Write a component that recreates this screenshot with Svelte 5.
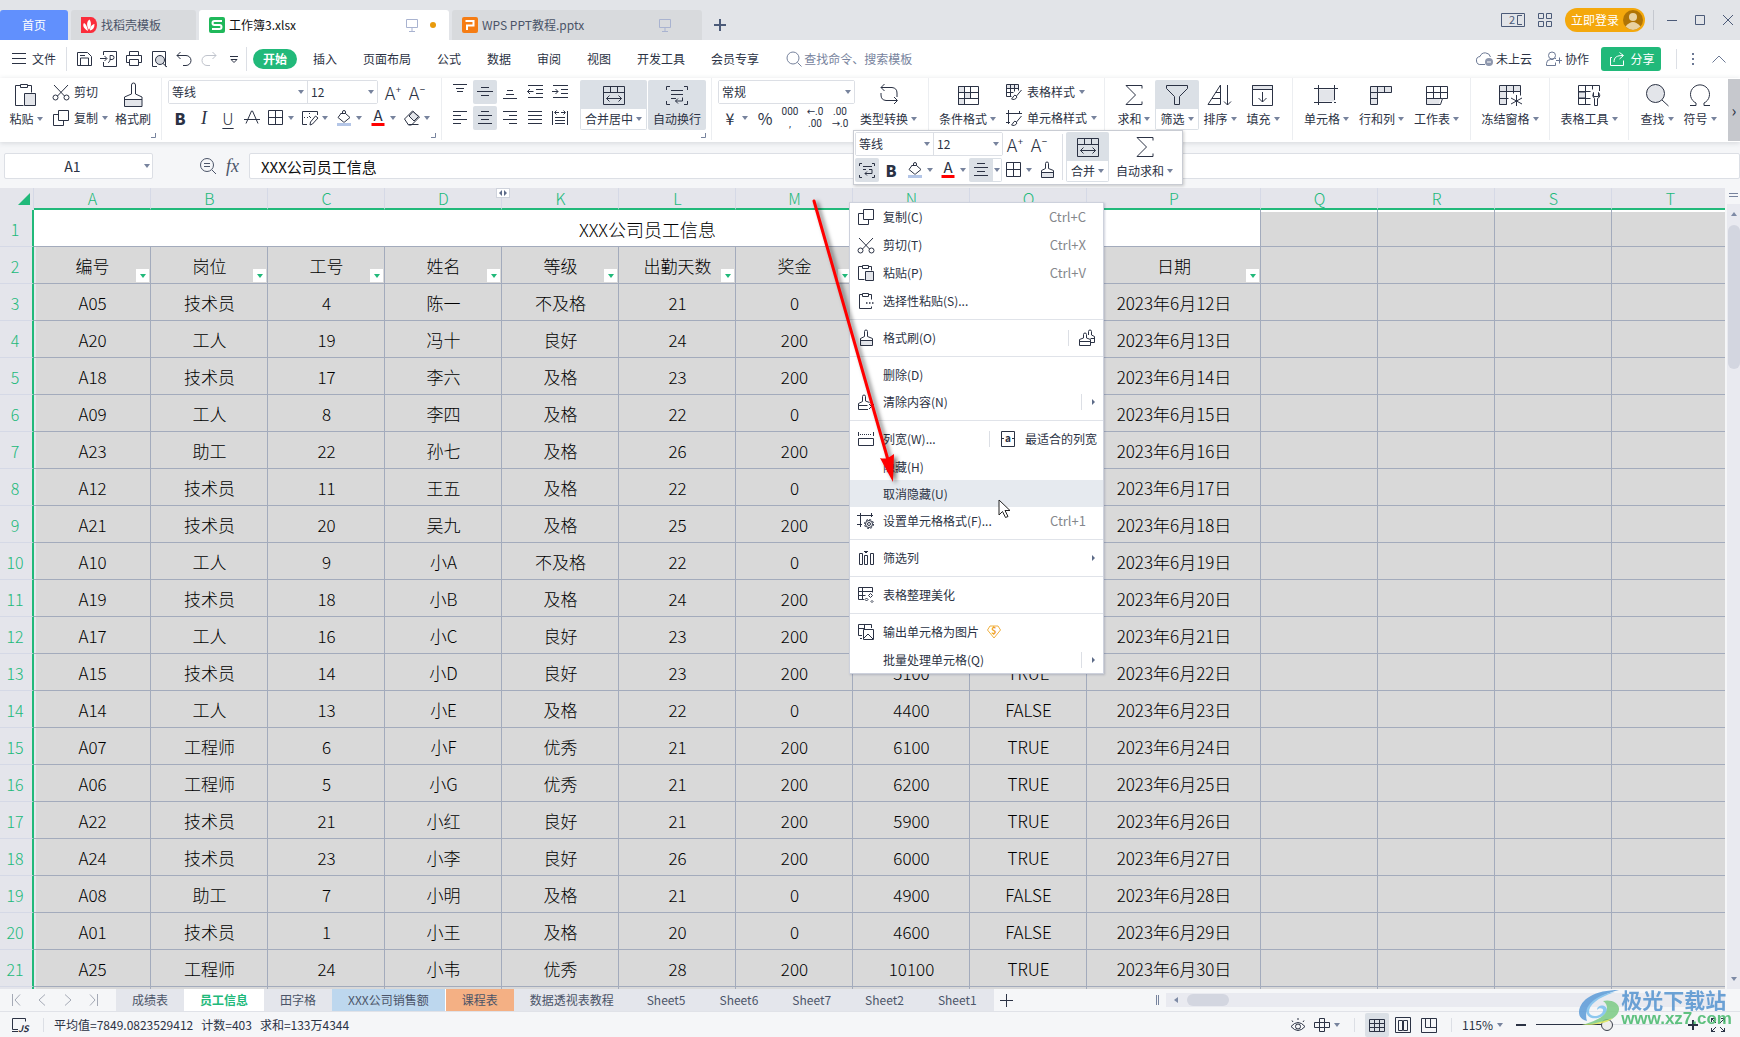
<script>
    // 20x20 toolbar icons and 26x26 ribbon icons, drawn on the half pixel
    const icons = {
        menu: '<path d="M3 4.5h14M3 9.5h14M3 14.5h14"/>',
        save: '<path d="M3.5 3.5h10l4 4v9h-14zM6.5 16v-7h8v7M6 6.5h5"/>',
        pdf: '<path d="M4.5 6V2.5h13v15h-13V13M1 9.5h6.5M5.5 7l2.5 2.5-2.5 2.5M9 13.5c3 0 2-7 2-7h2a2 2 0 0 1 0 4h-2"/>',
        print: '<path d="M5.5 6.5v-4h9v4M5.5 13.5h-3v-7h15v7h-3M5.5 10.5h9v6h-9z"/>',
        preview: '<path d="M8 17.5H3.5v-15h13v5M16.5 7v10.5"/><circle cx="11" cy="11" r="4.5" fill="#d5d8de"/><path d="M14 14.5l4 3.5"/>',
        undo: '<path d="M3 6.5h9a5 5 0 0 1 0 10h-3M6.5 3l-3.5 3.5 3.5 3.5"/>',
        redo: '<path d="M17 6.5H8a5 5 0 0 0 0 10h3M13.5 3l3.5 3.5-3.5 3.5"/>',
        more: '<path d="M6 7.5h8M7 10.5h6l-3 3z"/>',
        search: '<circle cx="9" cy="9" r="6"/><path d="M13.5 13.5l4 4"/>',
        cloud: '<path d="M10 15.5H6a4 4 0 0 1-1-8 5.5 5.5 0 0 1 10.5 0.5"/><circle cx="14" cy="13" r="4" fill="#8e97ad" stroke="none"/><path d="M12 13h4" stroke="#fff"/>',
        collab: '<circle cx="8" cy="6.5" r="3.5"/><path d="M10.5 9.5h1.5M2.5 16.5v-2a4 4 0 0 1 4-4h3M2.5 16.5h9v-3M12 11.5h6M15.5 8.5v6"/>',
        share: '<path d="M5 8.5H3.5v8h13v-5M7 13c0-5 3-6.5 9-6.5M12.5 3.5l4 3-4 3.5"/>',
        cut: '<circle cx="4.5" cy="15.5" r="2.5"/><circle cx="15.5" cy="15.5" r="2.5"/><path d="M3 3l10.5 11M17 3L6.5 14"/>',
        copy: '<path d="M7.5 2.5h10v10h-10zM7.5 6.5h-5v11h10v-5"/>',
        pasteS: '<path d="M6.5 3.5h-4v13h6M12.5 3.5h3v4M6.5 2.5h6v3h-6z"/><path d="M9.5 8.5h8v9h-8z" fill="#e3e5ea"/>',
        special: '<path d="M6.5 3.5h-3v14h12v-2M12.5 3.5h3v5M6.5 2.5h6v3h-6z"/><path d="M10 12h1.5M13 12h1.5M16 12h1.5" stroke-width="1.5"/>',
        brushS: '<path d="M4 13h12v4H4z" fill="#e3e5ea" stroke="none"/><path d="M8.5 8.500V3.500a1.500 1.500 0 0 1 3 0V8.500l5 2v7h-12v-7zM4.500 12.500h12"/>',
        brush2: '<path d="M11.5 7V3.5a1.5 1.5 0 0 1 3 0V7l3 1.5v6h-4M6.5 10V6.5a1.5 1.5 0 0 1 3 0V10l4 1.5v6h-11v-6zM2.5 13.5h11M13.500 10.500h4"/>',
        clear: '<path d="M12 17.5H2.5v-6l4-2V4.5a1.5 1.5 0 0 1 3 0V9l4 1.5M2.5 13.5h9M13 12l5 5M18 12l-5 5"/>',
        strike: '<path d="M4 15.5L9.5 3h1L16 15.5M2 11.5h16"/>',
        border: '<path d="M2.5 2.5h14v14h-14zM9.5 2.5v14M2.5 9.5h14"/>',
        pen: '<path d="M7 16.5H2.5v-13h15V7M10.5 14l5-6 2.5 2-5.5 6-2.5 1z" /><path d="M4 9.5h8M9.5 5v6" stroke-dasharray="1 2"/>',
        fill: '<path d="M6.5 5.5h5l4.5 4-5.5 4.5h-1L4 9.5l3-4M8.5 5.5V4a1.5 1.5 0 0 1 3 0v1.5"/><path d="M3 16.5h14" stroke="#b4c6e7" stroke-width="3"/>',
        colorA: '<text x="10" y="13" text-anchor="middle" font-size="15" fill="currentColor" stroke="none">A</text><path d="M3.5 16.5h13" stroke="#f00" stroke-width="3"/>',
        eraser: '<path d="M2.5 11l8-8 7 6-8 8h-3z"/><path d="M7 8l4-4.5 5.5 5-4.5 4.5z" fill="#e3e5ea"/><path d="M6.5 16.5h10"/>',
        vtop: '<path d="M3 2.5h14M6 6.5h8M7 9.5h6"/>',
        vmid: '<path d="M6 5.5h8M2 9.5h16M6 13.5h8"/>',
        vbot: '<path d="M7 8.5h6M6 12.5h8M3 16.5h14"/>',
        left: '<path d="M3 3.5h14M3 7.5h8M3 11.5h14M3 15.5h8"/>',
        center: '<path d="M6 3.5h8M3 7.5h14M6 11.5h8M3 15.5h14"/>',
        right: '<path d="M3 3.5h14M9 7.5h8M3 11.5h14M9 15.5h8"/>',
        justify: '<path d="M3 3.5h14M3 7.5h14M3 11.5h14M3 15.5h14"/>',
        outdent: '<path d="M3 3.5h15M11 7.5h7M11 11.5h7M3 15.5h15M2.5 9.5h6M5 7l-2.5 2.5L5 12"/>',
        indent: '<path d="M3 3.5h15M11 7.5h7M11 11.5h7M3 15.5h15M2 9.5h6M5.5 7L8 9.5 5.5 12"/>',
        distrib: '<path d="M2.5 3v14M17.5 3v14M5 4.5h4M11 4.5h4M6.5 2.5l-2 2 2 2M13.5 2.5l2 2-2 2M5 9.5h10M5 12.5h10M5 15.5h10"/>',
        style1: '<path d="M3 3h11v3H3z" fill="#e3e5ea" stroke="none"/><path d="M2.5 2.5h12v6M2.5 2.5v12h5M2.5 6.5h12M2.5 10.5h7M6.5 2.5v12M10.5 2.5v7M17.5 8l-5 6M11 13l2 2c-1 2.5-4 3-5.5 2 1.5-1 1.5-3 3.5-4z"/>',
        style2: '<path d="M2 5.5h16M4.5 2v14M2 14.5h4M15.5 3v3M17.5 8l-5 6M11 13l2 2c-1 2.5-4 3-5.5 2 1.5-1 1.5-3 3.5-4z"/>',
        width: '<path d="M2.5 9.5h15v7h-15zM2.5 3v4M17.5 3v4"/><path d="M4 5.5h12" stroke-dasharray="1 1"/>',
        fit: '<path d="M3.5 2.5h13v15h-13zM4 9.5h2M14 9.5h2"/><text x="10" y="13" text-anchor="middle" font-size="10" font-weight="700" fill="currentColor" stroke="none">a</text>',
        cellfmt: '<path d="M1 4.5h16M4.5 2v14M1 13.5h5M15.5 2v4"/><circle cx="13" cy="13" r="4.5" stroke-dasharray="2 1.5" stroke-width="1"/><circle cx="13" cy="13" r="3.5"/><circle cx="13" cy="13" r="1.5"/>',
        filtercol: '<path d="M3.5 5.5h3v11h-3zM8.5 7.5h3v9h-3zM14.5 5.5h3v11h-3zM8 3.5h4M9 4.5h2"/>',
        beautify: '<path d="M8 14.5H2.5v-12h14v5M2.5 6.5h14M6.5 2.5v12M2.5 10.5h7"/><path d="M14.5 8.5l2 2-2 2-2-2zM10.5 13l1.5 1.5-1.5 1.5-1.5-1.5zM16 15.5l1 1-1 1-1-1z"/>',
        output: '<path d="M6 13.5H2.5v-11h13V6M2.5 6.5h6M8.5 2.5v5M7.5 7.5h10v10h-10zM8 16l4-4 5 5M4 16.5h2"/>',
        wrapS: '<path d="M5 3.5H2.5V6M15 3.5h2.5V6M5 17.5H2.5V15M15 17.5h2.5V15M6 6.5h9M6 9.5h3M12 9.5h3v4H8M10 11.5l-2 2 2 2"/>',
        zoomout: '<circle cx="9" cy="9" r="6.5"/><path d="M14 14l4 4M6 7.5h6M6 10.5h6"/>',
        monitor: '<path d="M4.5 4.5h11v8h-11zM10 13v3M7 16.5h6"/>',
        eye: '<path d="M3 11.5q7-8 14 0q-7 8-14 0M4 5.5l1 1.5M10 3v2M16 5.5l-1 1.5"/><circle cx="10" cy="11.5" r="2.5"/>',
        cross: '<path d="M7.5 3.5h5v4h5v5h-5v4h-5v-4h-5v-5h5zM7.5 7.5h5v5h-5z"/>',
        sheet: '<path d="M2.5 4.5h15v12h-15zM2.5 8.5h15M2.5 12.5h15M7.5 4.5v12M12.5 4.5v12"/>',
        page: '<path d="M2.5 2.5h15v15h-15zM5.5 5.5h4v10h-4zM10.5 5.5h4v10h-4z"/>',
        brk: '<path d="M2.5 3.5h15v14h-15zM6.5 4v8.5h11M11.5 4v8"/>',
        full: '<path d="M12 8l5-5M13 3.5h3.5V7M8 8L3 3M3.5 7V3.5H7M12 12l5 5M13 16.5h3.5V13M8 12l-5 5M3.5 13v3.5H7"/>',
        macro: '<path d="M8 14.5H2.5v-11h13v3M2 16.5h6"/><text x="8" y="17" font-size="9" font-style="italic" font-weight="700" fill="currentColor" stroke="none">JS</text>',
        paste: '<path d="M7.5 4.5h-5v20h8M14.5 4.5h4v7M7.5 3.5h7v3h-7z"/><path d="M11.5 12.5h11v12h-11z" fill="#e3e5ea"/>',
        brush: '<path d="M5 18.5h17v7H5z" fill="#e3e5ea" stroke="none"/><path d="M11.5 13V4q0-2 2-2t2 2v9l6.500 3v9.500h-17.500V16zM4.500 18.500h17.500"/>',
        merge: '<path d="M2.5 5.5h21v18h-21zM2.5 11.5h21M9.5 6v5M16.5 6v5"/><path d="M5.5 17.5h15M8.5 14.5l-3 3 3 3M17.5 14.5l3 3-3 3"/>',
        wrap: '<path d="M6 5.5H2.5V9M20 5.5h3.5V9M6 23.5H2.5V20M20 23.5h3.5V20M7 9.5h12M7 13.5h12M7 17.5h5M18.5 16.5v3.5h-7M14 17.5l-2.5 2.5 2.5 2.5"/>',
        convert: '<path d="M5 12v2q0 5 5 5.500h11M18 16l3.500 3.500-3.500 3.500M21 16v-4q0-5-5-5.500H5M8.500 3L5 6.500 8.500 10"/>',
        cond: '<path d="M3.5 5.5h6v6h-6zM9.5 11.5h6v6h-6zM3.5 17.5h6v6h-6z" fill="#e3e5ea"/><path d="M3.5 5.5h20v18h-20zM9.5 5.5v18M15.5 5.5v12M3.5 11.5h20M3.5 17.5h20"/>',
        sum: '<path d="M21 7.5v-3H5l9.5 9.5L5 23.5h16v-3"/>',
        filter: '<path d="M2.5 4.5h21v3l-8 8v8h-5v-8l-8-8z"/>',
        sort: '<path d="M1 23.5L13.5 4v19.5zM5 17.5h8M8.5 11.5h5M20.5 4v20M17 20.5l3.5 3.5 3.5-3.5"/>',
        filldown: '<path d="M2.5 4.5h20v20h-20z"/><path d="M2.5 4.5h20v4h-20z" fill="#e3e5ea"/><path d="M12.5 11v10M8.5 17l4 4 4-4"/>',
        cell: '<path d="M5.5 8.5h16v12h-16z" fill="#e3e5ea" stroke="none"/><path d="M1 7.5h24M5.5 4v20M21.5 4v15M1 21.5h18M21 21.5h2"/>',
        rowcol: '<path d="M2.5 5.5h21v6h-14v12h-7z" fill="#e3e5ea"/><path d="M2.5 11.5h7M2.5 17.5h7M9.5 5.5v6M16.5 5.5v6"/>',
        worksheet: '<path d="M3 18h13.5l-1.5 5h-12z" fill="#e3e5ea" stroke="none"/><path d="M2.5 5.5h21v12h-5l-2 6h-14zM2.5 11.5h21M2.5 17.5h16M9.5 5.5v12M16.5 5.5v12"/>',
        freeze: '<path d="M2.5 4.5h21v6h-14v13h-7z" fill="#e3e5ea"/><path d="M2.5 10.5h21v4M2.5 17.5h9M9.5 4.5v19M16.5 4.5v8M19.5 14v11M14 17l11 6M25 17l-11 6"/>',
        tools: '<path d="M2.5 11h7v6h-7z" fill="#e3e5ea"/><path d="M23.5 10V4.5h-21v19h12M2.5 10.5h12M2.5 17.5h12M9.5 4.5v19M16.5 4.5v4M18.5 24.5v-7q-3-2-1-6v4h5v-4q3 4-1 6v7z"/>',
        find: '<circle cx="11.5" cy="12.5" r="9" fill="#e3e5ea"/><path d="M18 19l6.5 6"/>',
        omega: '<path d="M3 24.5h6v-2.5a9.5 9.5 0 1 1 8 0v2.5h6"/>'
    }

    const menus = ["插入", "页面布局", "公式", "数据", "审阅", "视图", "开发工具", "会员专享"]
    const quick = ["save", "pdf", "print", "preview", "undo", "redo", "more"]

    const columns = [
        { id: "A", name: "编号" }, { id: "B", name: "岗位" }, { id: "C", name: "工号" }, { id: "D", name: "姓名" },
        { id: "K", name: "等级" }, { id: "L", name: "出勤天数" }, { id: "M", name: "奖金" }, { id: "N", name: "" },
        { id: "O", name: "" }, { id: "P", name: "日期" }
    ]
    const blanks = ["Q", "R", "S", "T"]

    const rows = [
        ["A05", "技术员", 4, "陈一", "不及格", 21, 0, "", ""],
        ["A20", "工人", 19, "冯十", "良好", 24, 200, "", ""],
        ["A18", "技术员", 17, "李六", "及格", 23, 200, "", ""],
        ["A09", "工人", 8, "李四", "及格", 22, 0, "", ""],
        ["A23", "助工", 22, "孙七", "及格", 26, 200, "", ""],
        ["A12", "技术员", 11, "王五", "及格", 22, 0, "", ""],
        ["A21", "技术员", 20, "吴九", "及格", 25, 200, "", ""],
        ["A10", "工人", 9, "小A", "不及格", 22, 0, "", ""],
        ["A19", "技术员", 18, "小B", "及格", 24, 200, "", ""],
        ["A17", "工人", 16, "小C", "良好", 23, 200, "", ""],
        ["A15", "技术员", 14, "小D", "良好", 23, 200, 5100, "TRUE"],
        ["A14", "工人", 13, "小E", "及格", 22, 0, 4400, "FALSE"],
        ["A07", "工程师", 6, "小F", "优秀", 21, 200, 6100, "TRUE"],
        ["A06", "工程师", 5, "小G", "优秀", 21, 200, 6200, "TRUE"],
        ["A22", "技术员", 21, "小红", "良好", 21, 200, 5900, "TRUE"],
        ["A24", "技术员", 23, "小李", "良好", 26, 200, 6000, "TRUE"],
        ["A08", "助工", 7, "小明", "及格", 21, 0, 4900, "FALSE"],
        ["A01", "技术员", 1, "小王", "及格", 20, 0, 4600, "FALSE"],
        ["A25", "工程师", 24, "小韦", "优秀", 28, 200, 10100, "TRUE"]
    ]

    const sheets = [
        { name: "成绩表" }, { name: "员工信息", kind: "current" }, { name: "田字格" },
        { name: "XXX公司销售额", kind: "blue" }, { name: "课程表", kind: "orange" }, { name: "数据透视表教程" },
        { name: "Sheet5", kind: "plain" }, { name: "Sheet6", kind: "plain" }, { name: "Sheet7", kind: "plain" },
        { name: "Sheet2", kind: "plain" }, { name: "Sheet1", kind: "plain" }
    ]

    const contextMenu = [
        { icon: "copy", text: "复制(C)", key: "Ctrl+C" },
        { icon: "cut", text: "剪切(T)", key: "Ctrl+X" },
        { icon: "pasteS", text: "粘贴(P)", key: "Ctrl+V" },
        { icon: "special", text: "选择性粘贴(S)..." },
        null,
        { icon: "brushS", text: "格式刷(O)", extra: "brush2" },
        null,
        { text: "删除(D)", short: true },
        { icon: "clear", text: "清除内容(N)", sub: true, split: true },
        null,
        { icon: "width", text: "列宽(W)...", extra: "fit", extraText: "最适合的列宽" },
        { text: "隐藏(H)", short: true },
        { text: "取消隐藏(U)", hover: true, short: true },
        { icon: "cellfmt", text: "设置单元格格式(F)...", key: "Ctrl+1" },
        null,
        { icon: "filtercol", text: "筛选列", sub: true },
        null,
        { icon: "beautify", text: "表格整理美化" },
        null,
        { icon: "output", text: "输出单元格为图片", coin: true },
        { text: "批量处理单元格(Q)", sub: true, split: true, short: true }
    ]

    let zoom = $state(115)
    let cellText = $state("XXX公司员工信息")
    let cellName = $state("A1")
</script>

{#snippet icon(name, size = 20)}
    <svg class="icon" width={size} height={size} viewBox="0 0 {size} {size}" aria-hidden="true">{@html icons[name]}</svg>
{/snippet}

{#snippet caret()}
    <svg class="caret" width="6" height="4" viewBox="0 0 6 4" aria-hidden="true"><path d="M0 0h6L3 4z" /></svg>
{/snippet}

{#snippet tool(name, drop = false, on = false)}
    <button class="tool" class:drop class:on aria-label={name}>
        <span class="face">{@render icon(name)}</span>
        {#if drop}{@render caret()}{/if}
    </button>
{/snippet}

{#snippet letter(text, kind, label)}
    <button class="tool" aria-label={label}><span class="letter {kind}">{text}</span></button>
{/snippet}

{#snippet big(name, text, drop = true, on = "")}
    <button class="big {on}">
        <span class="pic">{@render icon(name, 26)}</span>
        <span class="label">{text}{#if drop}{@render caret()}{/if}</span>
    </button>
{/snippet}

{#snippet wide(name, text, drop = true)}
    <button class="wide">{@render icon(name)}<span>{text}</span>{#if drop}{@render caret()}{/if}</button>
{/snippet}

{#snippet dropdown(label, value)}
    <span class="dropdown">
        <select aria-label={label}><option>{value}</option></select>
        {@render caret()}
    </span>
{/snippet}

{#snippet corner()}
    <svg class="corner" width="5" height="5" viewBox="0 0 5 5" aria-hidden="true"><path d="M4.5 0v4.5H0" /></svg>
{/snippet}

<div class="window">
    <header class="titlebar">
        <button class="tab home">首页</button>
        <button class="tab docer">
            <svg width="16" height="16" viewBox="0 0 16 16"><path d="M0 0h10a6 8 0 0 1 0 16H0z" fill="#fb2d3b" /><path d="M7 14C2 11 1.5 8 3 6c2 1 3.5 4 4 8zM8 13C5 8 6 4 8.5 2.5 11 6 10 10 8 13zM9 13.5c0-4 2-6 4.5-6.5 0 4-1.5 6-4.5 6.5z" fill="#fff" /></svg>
            <span>找稻壳模板</span>
        </button>
        <button class="tab file current">
            <svg width="16" height="16" viewBox="0 0 16 16"><rect width="16" height="16" rx="2" fill="#1fb85a" /><path d="M13 4H5.5a2 2 0 0 0 0 4h5a2 2 0 0 1 0 4H3" fill="none" stroke="#fff" stroke-width="2" /></svg>
            <span class="grow">工作簿3.xlsx</span>
            <span class="pale">{@render icon("monitor")}</span>
            <span class="dot"></span>
        </button>
        <button class="tab file">
            <svg width="16" height="16" viewBox="0 0 16 16"><rect width="16" height="16" rx="2" fill="#f57c14" /><path d="M5 13V8.5h6.5V4H3.5" fill="none" stroke="#fff" stroke-width="2" /></svg>
            <span class="grow">WPS PPT教程.pptx</span>
            <span class="pale last">{@render icon("monitor")}</span>
        </button>
        <button class="plus" aria-label="新建标签"><svg width="12" height="12" viewBox="0 0 12 12"><path d="M6 0v12M0 6h12" stroke="#4b5a78" stroke-width="2" /></svg></button>
        <div class="winctl">
            <svg width="24" height="14" viewBox="0 0 24 14"><path d="M.5.5h23v13H.5zM21 2.5h-4.5v9H21M19 11.5h2" /><text x="8" y="11" font-size="11" fill="#4b5a78" stroke="none">2</text></svg>
            <svg width="14" height="14" viewBox="0 0 14 14"><path d="M.5.5h5v5h-5zM8.5.5h5v5h-5zM.5 8.5h5v5h-5zM8.5 8.5h5v5h-5z" /></svg>
            <button class="login">立即登录<svg width="20" height="20" viewBox="0 0 20 20"><circle cx="10" cy="10" r="10" fill="#b07405" stroke="none" /><circle cx="10" cy="7" r="4" fill="#e9d2a1" stroke="none" /><path d="M2.5 16.5q7.5-9 15 0-7.500 7-15 0z" fill="#e9d2a1" stroke="none" /></svg></button>
            <span class="bar"></span>
            <button aria-label="最小化"><svg width="10" height="12" viewBox="0 0 10 12"><path d="M0 6.5h10" /></svg></button>
            <button aria-label="最大化"><svg width="10" height="10" viewBox="0 0 10 10"><path d="M.5.5h9v9h-9z" /></svg></button>
            <button aria-label="关闭"><svg width="10" height="10" viewBox="0 0 10 10"><path d="M0 0l10 10M10 0L0 10" /></svg></button>
        </div>
    </header>

    <nav class="menubar">
        <button class="filemenu">{@render icon("menu")}文件</button>
        <span class="bar"></span>
        {#each quick as q}
            <button class="quick" class:dim={q == "redo"} aria-label={q}>{@render icon(q)}</button>
        {/each}
        <span class="bar"></span>
        <button class="pill">开始</button>
        {#each menus as m}
            <button class="menu">{m}</button>
        {/each}
        <label class="find">{@render icon("search")}<input placeholder="查找命令、搜索模板" /></label>
        <div class="account">
            <button class="soft">{@render icon("cloud")}<span>未上云</span></button>
            <button class="soft">{@render icon("collab")}<span>协作</span></button>
            <button class="share">{@render icon("share")}分享</button>
            <span class="bar"></span>
            <button class="soft" aria-label="更多"><svg width="4" height="14" viewBox="0 0 4 14"><path d="M1 1h2v2H1zM1 6h2v2H1zM1 11h2v2H1z" fill="#6b7894" /></svg></button>
            <button class="soft fold" aria-label="收起"><svg class="icon" width="14" height="8" viewBox="0 0 14 8"><path d="M.5 7.5l6.5-6.5 6.5 6.5" /></svg></button>
        </div>
    </nav>

    <section class="ribbon">
        <div class="group clip">
            {@render big("paste", "粘贴")}
            <div class="stack">
                {@render wide("cut", "剪切", false)}
                {@render wide("copy", "复制")}
            </div>
            {@render big("brush", "格式刷", false)}
            {@render corner()}
        </div>
        <div class="group">
            <div class="stack">
                <div class="line">
                    <span class="fontbox">{@render dropdown("字体", "等线")}{@render dropdown("字号", "12")}</span>
                    <span class="sizes">{@render letter("A⁺", "scale", "增大字号")}{@render letter("A⁻", "scale", "减小字号")}</span>
                </div>
                <div class="line">
                    {@render letter("B", "bold", "加粗")}
                    {@render letter("I", "italic", "倾斜")}
                    {@render letter("U", "under", "下划线")}
                    {@render tool("strike")}
                    {@render tool("border", true)}
                    {@render tool("pen", true)}
                    {@render tool("fill", true)}
                    {@render tool("colorA", true)}
                    {@render tool("eraser", true)}
                </div>
            </div>
            {@render corner()}
        </div>
        <div class="group">
            <div class="stack">
                <div class="line spaced">
                    {@render tool("vtop")}{@render tool("vmid", false, true)}{@render tool("vbot")}{@render tool("outdent")}{@render tool("indent")}
                </div>
                <div class="line spaced">
                    {@render tool("left")}{@render tool("center", false, true)}{@render tool("right")}{@render tool("justify")}{@render tool("distrib")}
                </div>
            </div>
            <div class="pair">
                {@render big("merge", "合并居中", true, "on split")}
                {@render big("wrap", "自动换行", false, "on")}
            </div>
            {@render corner()}
        </div>
        <div class="group">
            <div class="stack number">
                <span class="fontbox">{@render dropdown("数字格式", "常规")}</span>
                <div class="line spaced">
                    <button class="tool drop" aria-label="货币"><span class="face letter">¥</span>{@render caret()}</button>
                    {@render letter("%", "", "百分比")}
                    <button class="tool" aria-label="千位分隔"><span class="tiny">000<br />,</span></button>
                    <button class="tool" aria-label="增加小数"><span class="tiny">←.0<br />.00</span></button>
                    <button class="tool" aria-label="减少小数"><span class="tiny">.00<br />→.0</span></button>
                </div>
            </div>
            {@render big("convert", "类型转换")}
        </div>
        <div class="group">
            {@render big("cond", "条件格式")}
            <div class="stack styles">
                {@render wide("style1", "表格样式")}
                {@render wide("style2", "单元格样式")}
            </div>
        </div>
        <div class="group row">
            {@render big("sum", "求和")}
            {@render big("filter", "筛选", true, "on split")}
            {@render big("sort", "排序")}
            {@render big("filldown", "填充")}
        </div>
        <div class="group row">
            {@render big("cell", "单元格")}
            {@render big("rowcol", "行和列")}
            {@render big("worksheet", "工作表")}
        </div>
        <div class="group row">{@render big("freeze", "冻结窗格")}</div>
        <div class="group row">{@render big("tools", "表格工具")}</div>
        <div class="group row last">
            {@render big("find", "查找")}
            {@render big("omega", "符号")}
        </div>
        <button class="scroller" aria-label="向右滚动">›</button>
    </section>

    <section class="formula">
        <span class="namebox"><input aria-label="名称框" bind:value={cellName} />{@render caret()}</span>
        <span class="fx">{@render icon("zoomout")}<i>fx</i></span>
        <input class="content" aria-label="编辑栏" bind:value={cellText} />
    </section>

    <main class="work">
        <div class="grid">
            <table>
                <colgroup>
                    <col class="num" />
                    {#each columns as c}<col class={c.id == "P" ? "date" : "std"} />{/each}
                    {#each blanks as b}<col class="std" />{/each}
                </colgroup>
                <thead>
                    <tr>
                        <th class="all"><svg width="12" height="12" viewBox="0 0 12 12"><path d="M12 0v12H0z" fill="#21b97a" /></svg></th>
                        {#each columns as c}<th>{c.id}</th>{/each}
                        {#each blanks as b}<th>{b}</th>{/each}
                    </tr>
                </thead>
                <tbody>
                    <tr class="first">
                        <th>1</th>
                        <td class="title" colspan="10">XXX公司员工信息</td>
                        {#each blanks as b}<td></td>{/each}
                    </tr>
                    <tr>
                        <th>2</th>
                        {#each columns as c}
                            <td class="name">{c.name}<button class="filter" aria-label="筛选{c.name}"><svg width="6" height="4" viewBox="0 0 6 4"><path d="M0 0h6L3 4z" fill="#21b97a" /></svg></button></td>
                        {/each}
                        {#each blanks as b}<td></td>{/each}
                    </tr>
                    {#each rows as row, i}
                        <tr>
                            <th>{i + 3}</th>
                            {#each row as value}<td>{value}</td>{/each}
                            <td>2023年6月{i + 12}日</td>
                            {#each blanks as b}<td></td>{/each}
                        </tr>
                    {/each}
                    <tr>
                        <th></th>
                        {#each columns as c}<td></td>{/each}
                        {#each blanks as b}<td></td>{/each}
                    </tr>
                </tbody>
            </table>
            <span class="hidden-cols"><svg width="8" height="6" viewBox="0 0 8 6"><path d="M3 0v6L0 3zM5 0v6l3-3z" fill="#5d6b88" /></svg></span>
        </div>
        <div class="vscroll">
            <span class="splitter"></span>
            <div class="track">
                <svg width="6" height="4" viewBox="0 0 6 4"><path d="M3 0l3 4H0z" fill="#7d8aa5" /></svg>
                <span class="thumb"></span>
                <svg width="6" height="4" viewBox="0 0 6 4"><path d="M0 0h6L3 4z" fill="#7d8aa5" /></svg>
            </div>
        </div>
    </main>

    <nav class="sheets">
        <div class="steps">
            <button aria-label="第一个"><svg width="10" height="12" viewBox="0 0 10 12"><path d="M1.5 0v12M9 .5L4 6l5 5.5" /></svg></button>
            <button aria-label="上一个"><svg width="10" height="12" viewBox="0 0 10 12"><path d="M8 .5L2 6l6 5.5" /></svg></button>
            <button aria-label="下一个"><svg width="10" height="12" viewBox="0 0 10 12"><path d="M2 .5L8 6l-6 5.5" /></svg></button>
            <button aria-label="最后一个"><svg width="10" height="12" viewBox="0 0 10 12"><path d="M8.5 0v12M1 .5L6 6l-5 5.5" /></svg></button>
        </div>
        {#each sheets as s}
            <button class="sheet {s.kind ?? ''}">{s.name}</button>
        {/each}
        <button class="add" aria-label="新建工作表"><svg width="13" height="13" viewBox="0 0 13 13"><path d="M6.5 0v13M0 6.5h13" stroke="#2b3244" /></svg></button>
        <div class="hscroll">
            <span class="grip"></span>
            <div class="track">
                <svg width="4" height="6" viewBox="0 0 4 6"><path d="M4 0v6L0 3z" fill="#7d8aa5" /></svg>
                <span class="thumb"></span>
            </div>
        </div>
    </nav>

    <footer class="status">
        {@render icon("macro")}
        <span class="bar"></span>
        <span class="sums"><span>平均值=7849.0823529412</span><span>计数=403</span><span>求和=133万4344</span></span>
        <div class="views">
            {@render tool("eye")}
            {@render tool("cross", true)}
            <span class="bar"></span>
            {@render tool("sheet", false, true)}
            {@render tool("page")}
            {@render tool("brk")}
            <span class="bar"></span>
            <button class="percent">{zoom}%{@render caret()}</button>
            <button class="sign" aria-label="缩小"><svg width="10" height="10" viewBox="0 0 10 10"><path d="M0 5h10" /></svg></button>
            <input type="range" min="15" max="215" aria-label="显示比例" bind:value={zoom} />
            <button class="sign" aria-label="放大"><svg width="10" height="10" viewBox="0 0 10 10"><path d="M0 5h10M5 0v10" /></svg></button>
            {@render tool("full")}
        </div>
    </footer>

    <div class="minibar">
        <div class="stack">
            <div class="line">
                <span class="fontbox">{@render dropdown("字体", "等线")}{@render dropdown("字号", "12")}</span>
                <span class="sizes">{@render letter("A⁺", "scale", "增大字号")}{@render letter("A⁻", "scale", "减小字号")}</span>
            </div>
            <div class="line">
                {@render tool("wrapS", false, true)}
                {@render letter("B", "bold", "加粗")}
                {@render tool("fill", true)}
                {@render tool("colorA", true)}
                {@render tool("center", true, true)}
                {@render tool("border", true)}
                {@render tool("brushS")}
            </div>
        </div>
        <span class="bar"></span>
        {@render big("merge", "合并", true, "on split")}
        {@render big("sum", "自动求和")}
    </div>

    <div class="context">
        {#each contextMenu as item}
            {#if item == null}
                <hr />
            {:else}
                <div class="item" class:hover={item.hover} class:short={item.short}>
                    <button class="entry">
                        <span class="slot">{#if item.icon}{@render icon(item.icon)}{/if}</span>
                        <span>{item.text}</span>
                        {#if item.coin}<svg class="coin" width="14" height="14" viewBox="0 0 14 14"><path d="M3 1h8l2.5 4L7 13 .5 5z" /><text x="7" y="9" text-anchor="middle" font-size="9">$</text></svg>{/if}
                        {#if item.key}<kbd>{item.key}</kbd>{/if}
                    </button>
                    {#if item.split}<span class="bar"></span>{/if}
                    {#if item.sub}<svg class="more" width="3" height="6" viewBox="0 0 3 6"><path d="M0 0v6l3-3z" fill="#5d6b88" /></svg>{/if}
                    {#if item.extra}
                        <span class="bar"></span>
                        <button class="extra" aria-label={item.extraText ?? "多次格式刷"}>{@render icon(item.extra)}{#if item.extraText}<span>{item.extraText}</span>{/if}</button>
                    {/if}
                </div>
            {/if}
        {/each}
    </div>

    <svg class="arrow" width="100" height="296" viewBox="0 0 100 296" aria-hidden="true">
        <path d="M7 7L81 266" stroke="#f00" stroke-width="3" stroke-linecap="round" />
        <path d="M73 264q4 1 7 0 3-1 7-4l-1 28z" fill="#f00" />
    </svg>
    <svg class="cursor" width="13" height="20" viewBox="0 0 13 20" aria-hidden="true"><path d="M1 1v15l3.5-3.5 3 6 2.5-1-3-6h5z" fill="#fff" stroke="#222" /></svg>

    <div class="mark" aria-hidden="true">
        <svg width="44" height="40" viewBox="0 0 44 40">
            <path d="M42 2C18 2 3 11 2 24c0 5 3 8 8 9C6 21 17 8 42 2z" fill="#5b9bd8" />
            <path d="M38 4C20 10 12 17 12 24c1 6 12 5 14-1 1-3-4-4-6-1 0-6 10-6 10 0-1 8-17 12-20 4C7 18 20 6 38 4z" fill="#7cc0ee" />
            <path d="M26 13c8-2 17 2 16 9C40 33 22 37 5 37c11-3 24-8 25-16 0-4-1-6-4-8z" fill="#7ccb84" />
            <path d="M5 37c13 0 24-1 31-7-8 3-19 6-31 7z" fill="#e2e85a" />
        </svg>
        <div><b>极光下载站</b><span>www.xz7.com</span></div>
    </div>
</div>

<style>
    :global(body) {
        margin: 0;
        overflow: hidden;
    }

    .window {
        --ink: #2b3244;
        --green: #21b97a;
        --line: #dcdfe5;
        --on: #dbe0e6;
        position: relative;
        display: flex;
        flex-direction: column;
        height: 100vh;
        overflow: hidden;
        background: #f5f6f8;
        color: var(--ink);
        font-family: "Noto Sans CJK SC", "Noto Sans", sans-serif;
        font-size: 12px;
        line-height: 18px;
    }

    button, input, select {
        font: inherit;
        color: inherit;
        border: 0;
        padding: 0;
        margin: 0;
        background: none;
        outline: 0;
        white-space: nowrap;
    }

    svg {
        flex: none;
        display: block;
    }

    .icon {
        fill: none;
        stroke: currentColor;
    }

    .caret {
        flex: none;
        fill: #77839d;
    }

    .bar {
        flex: none;
        width: 1px;
        height: 20px;
        background: var(--line);
    }

    /* title bar */
    .titlebar {
        display: flex;
        gap: 3px;
        height: 30px;
        padding-top: 10px;
        background: #e2e4e8;
    }

    .tab {
        display: flex;
        align-items: center;
        gap: 4px;
        border-radius: 3px 3px 0 0;
        background: #d8dadd;
        color: #4b5468;
        padding: 0 10px;
        text-align: left;
    }

    .home {
        width: 68px;
        justify-content: center;
        background: #6190fd;
        color: #fff;
    }

    .docer {
        width: 125px;
    }

    .file {
        width: 250px;
    }

    .current {
        background: #fff;
        color: #111;
    }

    .grow {
        flex: 1;
    }

    .pale {
        color: #a9b3d0;
        padding-right: 4px;
    }

    .pale.last {
        padding-right: 17px;
    }

    .dot {
        width: 6px;
        height: 6px;
        border-radius: 50%;
        background: #e89a0c;
        margin-right: 3px;
    }

    .plus {
        padding: 0 9px;
    }

    .winctl {
        display: flex;
        align-items: center;
        gap: 13px;
        height: 20px;
        margin-left: auto;
        padding-right: 2px;
    }

    .winctl svg {
        fill: none;
        stroke: #4b5a78;
    }

    .winctl .bar {
        background: #c5c8cf;
        margin: 0 0 0 -5px;
    }

    .winctl > button:not(.login) {
        width: 15px;
    }

    .login {
        display: flex;
        align-items: center;
        gap: 4px;
        height: 24px;
        border-radius: 12px;
        padding: 0 2px 0 6px;
        background: #f4a80c;
        color: #fff;
    }

    /* menu row */
    .menubar {
        display: flex;
        align-items: center;
        height: 38px;
        background: #fff;
        padding-left: 9px;
    }

    .filemenu {
        display: flex;
        gap: 3px;
        align-items: center;
        width: 57px;
    }

    .menubar > .bar {
        height: 24px;
    }

    .quick {
        width: 25px;
        display: flex;
        justify-content: center;
    }

    .filemenu + .bar {
        margin-right: 4px;
    }

    .quick + .bar {
        margin-right: 6px;
    }

    .dim {
        color: #bfc3cc;
    }

    .pill {
        height: 20px;
        width: 44px;
        margin-right: 3px;
        border-radius: 10px;
        background: var(--green);
        color: #fff;
        font-weight: 700;
    }

    .menu {
        padding: 0 13px;
    }

    .find {
        display: flex;
        align-items: center;
        color: #77839d;
        margin-left: 12px;
    }

    .find input {
        width: 120px;
    }

    .find input::placeholder {
        color: #77839d;
        opacity: 1;
    }

    .account {
        display: flex;
        align-items: center;
        gap: 12px;
        margin-left: auto;
        padding-right: 14px;
    }

    .account .bar {
        margin: 0 2px 0 3px;
    }

    .soft {
        display: flex;
        align-items: center;
        gap: 1px;
        color: #6b7894;
    }

    .soft span {
        color: var(--ink);
    }

    .fold {
        margin-left: 5px;
    }

    .share {
        display: flex;
        align-items: center;
        justify-content: center;
        gap: 3px;
        width: 60px;
        height: 24px;
        border-radius: 3px;
        background: var(--green);
        color: #fff;
    }

    /* ribbon */
    .ribbon {
        position: relative;
        display: grid;
        grid-template-columns: 162px 280px 270px 217px 176px 188px 178px 79px 79px 1fr 12px;
        height: 64px;
        background: #fff;
        box-shadow: 0 1px 5px rgba(60, 70, 90, 0.18);
    }

    .group {
        position: relative;
        display: flex;
        align-items: flex-start;
        box-sizing: border-box;
        height: 62px;
        padding: 2px 0 0 6px;
        border-right: 1px solid #eceef1;
    }

    .group.clip {
        gap: 5px;
    }

    .group.row {
        padding-left: 0;
        justify-content: center;
    }

    .group.last {
        border-right: 0;
    }

    .stack {
        display: flex;
        flex-direction: column;
        gap: 2px;
    }

    .styles {
        padding-left: 4px;
    }

    .line {
        display: flex;
        align-items: center;
        height: 24px;
    }

    .spaced {
        gap: 1px;
    }

    .tool {
        display: flex;
        align-items: center;
        justify-content: center;
        width: 24px;
        height: 24px;
        border-radius: 2px;
    }

    .tool.drop {
        width: 34px;
        justify-content: flex-start;
    }

    .face {
        display: flex;
        justify-content: center;
        width: 24px;
    }

    .tool.on {
        background: var(--on);
    }

    .letter {
        font-size: 16px;
        line-height: 24px;
    }

    .bold {
        font-weight: 900;
    }

    .scale {
        font-size: 18px;
        font-weight: 300;
    }

    .italic {
        font-family: "Liberation Serif", serif;
        font-style: italic;
        font-size: 18px;
    }

    .under {
        font-weight: 300;
        text-decoration: underline;
        text-underline-offset: 3px;
    }

    .sizes {
        display: flex;
        padding-left: 3px;
    }

    .tiny {
        font-family: Roboto, "DejaVu Sans", sans-serif;
        font-size: 10px;
        line-height: 12px;
    }

    .fontbox {
        display: flex;
        box-sizing: border-box;
        height: 24px;
        border: 1px solid var(--line);
        border-radius: 2px;
    }

    .dropdown {
        position: relative;
        display: flex;
        align-items: center;
        width: 138px;
        background: #fff;
    }

    .dropdown + .dropdown {
        width: 69px;
        border-left: 1px solid var(--line);
    }

    .dropdown select {
        appearance: none;
        width: 100%;
        padding-left: 3px;
    }

    .dropdown .caret {
        position: absolute;
        right: 3px;
        pointer-events: none;
    }

    .number {
        width: 137px;
        margin-right: 1px;
    }

    .wide {
        display: flex;
        align-items: center;
        gap: 3px;
        height: 24px;
    }

    .wide .caret {
        margin-left: 1px;
    }

    .big {
        display: flex;
        flex-direction: column;
        align-items: center;
        box-sizing: border-box;
        height: 50px;
        min-width: 40px;
        border-radius: 2px;
        padding: 0 4px;
    }

    .pic {
        height: 28px;
        display: flex;
        align-items: center;
    }

    .label {
        display: flex;
        align-items: center;
        gap: 3px;
        height: 22px;
    }

    .clip .big {
        padding: 0;
    }

    .row .big {
        padding: 0 5px;
    }

    .big.on {
        background: var(--on);
        padding: 0 5px;
    }

    .big.split .label {
        box-sizing: border-box;
        height: 20px;
        margin: 1px -4px;
        padding: 0 4px;
        background: #fff;
    }

    .pair {
        display: flex;
        gap: 1px;
        margin-left: 8px;
    }

    .corner {
        position: absolute;
        right: 5px;
        bottom: 2px;
        fill: none;
        stroke: #77839d;
    }

    .scroller {
        height: 62px;
        margin-top: 1px;
        background: #c6c8cd;
        font-size: 16px;
    }

    /* formula bar */
    .formula {
        display: flex;
        align-items: center;
        height: 46px;
        padding: 2px 0 0 4px;
        box-sizing: border-box;
    }

    .namebox {
        display: flex;
        align-items: center;
        box-sizing: border-box;
        width: 149px;
        height: 26px;
        padding-right: 2px;
        border: 1px solid var(--line);
        border-radius: 2px;
        background: #fff;
        font-size: 14px;
    }

    .namebox input {
        flex: 1;
        min-width: 0;
        padding-right: 4px;
        text-align: center;
    }

    .fx {
        display: flex;
        align-items: center;
        justify-content: flex-end;
        gap: 8px;
        width: 96px;
        box-sizing: border-box;
        padding-right: 10px;
        color: #4b5468;
    }

    .fx i {
        font: italic 18px "Liberation Serif", serif;
    }

    .content {
        flex: 1;
        box-sizing: border-box;
        height: 26px;
        padding-left: 11px;
        border: 1px solid var(--line);
        border-radius: 2px;
        background: #fff;
        color: #111;
        font-size: 15px;
    }

    /* sheet */
    .work {
        display: flex;
        flex: 1;
        min-height: 0;
    }

    .grid {
        position: relative;
        flex: 1;
        overflow: hidden;
        background: #e4e5eb;
    }

    table {
        table-layout: fixed;
        width: 1728px;
        border-collapse: separate;
        border-spacing: 0;
        font-size: 17px;
        font-weight: 300;
        line-height: 24px;
    }

    .num {
        width: 34px;
    }

    .std {
        width: 117px;
    }

    .date {
        width: 174px;
    }

    th, td {
        box-sizing: border-box;
        height: 37px;
        padding: 1px 0 0 1px;
        text-align: center;
    }

    th {
        font-weight: 300;
        font-size: 16px;
        color: var(--green);
        background: #e4e5eb;
    }

    thead th {
        height: 22px;
        line-height: 19px;
        border-bottom: 2px solid var(--green);
        border-right: 1px solid #d5d9e6;
    }

    thead .all {
        border-bottom-color: #e4e5eb;
    }

    .all svg {
        margin-left: 17px;
    }

    tbody th {
        border-right: 2px solid var(--green);
        border-bottom: 1px solid #d5d9e6;
        padding-right: 3px;
    }

    td {
        background: #d9d9d9;
        border-right: 1px solid #a3abbc;
        border-bottom: 1px solid #a3abbc;
        color: #000;
    }

    th + td {
        box-shadow: inset 2px 0 #e6e8ec;
    }

    .first td {
        box-shadow: inset 0 2px #fff;
    }

    .title {
        background: #fff;
        font-size: 18px;
    }

    .name {
        position: relative;
    }

    .filter {
        position: absolute;
        right: 1px;
        bottom: 1px;
        display: flex;
        align-items: center;
        justify-content: center;
        width: 13px;
        height: 13px;
        background: #fff;
    }

    .hidden-cols {
        position: absolute;
        left: 496px;
        top: 0;
        padding: 1px 2px;
        border: 1px solid #cfd3dc;
        background: #fff;
    }

    .vscroll {
        display: flex;
        flex-direction: column;
        width: 13px;
        padding-left: 2px;
    }

    .splitter {
        height: 2px;
        margin: 5px 2px 7px;
        border: solid #77839d;
        border-width: 1px 0;
    }

    .track {
        flex: 1;
        display: flex;
        align-items: center;
        background: #e9eaf0;
    }

    .vscroll .track {
        flex-direction: column;
        padding: 8px 0;
    }

    .thumb {
        border-radius: 6px;
        background: #d3d6e0;
    }

    .vscroll .thumb {
        width: 12px;
        height: 144px;
        margin: 9px 0 auto;
    }

    /* sheet tabs */
    .sheets {
        display: flex;
        height: 22px;
        border-bottom: 1px solid #e0e2e8;
    }

    .steps {
        display: flex;
        align-items: center;
        gap: 16px;
        width: 105px;
        padding-left: 11px;
    }

    .steps path {
        fill: none;
        stroke: #a4a9b5;
    }

    .sheet {
        padding: 0 16px;
        background: #e4e6ec;
        color: #4b5468;
    }

    .sheet.plain {
        padding: 0 17px;
    }

    .sheet.current {
        background: #fff;
        color: var(--green);
        font-weight: 700;
    }

    .sheet.blue {
        background: #bdd7ee;
        border-right: 1px solid #fff;
    }

    .sheet.orange {
        background: #f4b084;
    }

    .add {
        padding: 0 6px;
    }

    .hscroll {
        display: flex;
        align-items: center;
        width: 584px;
        margin-left: auto;
    }

    .grip {
        width: 1px;
        height: 10px;
        margin-right: 7px;
        border: solid #77839d;
        border-width: 0 1px;
    }

    .hscroll .track {
        height: 14px;
        margin-right: 15px;
        padding-left: 8px;
        gap: 9px;
    }

    .hscroll .thumb {
        width: 42px;
        height: 12px;
    }

    /* status bar */
    .status {
        display: flex;
        align-items: center;
        height: 25px;
        padding-left: 10px;
    }

    .status .bar {
        height: 14px;
        margin: 0 10px;
    }

    .status > .bar {
        margin-left: 13px;
    }

    .sums {
        display: flex;
        gap: 8px;
    }

    .views {
        display: flex;
        align-items: center;
        margin-left: auto;
        padding-right: 10px;
    }

    .views .tool + .tool:not(.drop) {
        margin-left: 2px;
    }

    .percent {
        display: flex;
        align-items: center;
        gap: 4px;
        width: 54px;
    }

    .sign svg {
        stroke: var(--ink);
        stroke-width: 2;
    }

    .sign + .tool {
        margin-left: 8px;
    }

    .views input {
        appearance: none;
        width: 142px;
        height: 12px;
        margin: 0 10px;
        background: linear-gradient(var(--ink), var(--ink)) left / 50% 1px no-repeat,
            linear-gradient(var(--line), var(--line)) center / 100% 1px no-repeat;
    }

    .views input::-webkit-slider-thumb {
        appearance: none;
        box-sizing: border-box;
        width: 12px;
        height: 12px;
        border: 1px solid #3a3f4b;
        border-radius: 50%;
        background: #ececec;
    }

    /* floating toolbar */
    .minibar {
        position: absolute;
        left: 853px;
        top: 130px;
        display: flex;
        align-items: flex-start;
        gap: 3px;
        box-sizing: border-box;
        height: 55px;
        width: 330px;
        padding: 1px;
        border: 1px solid #c9ccd3;
        background: #fff;
        box-shadow: 1px 1px 3px rgba(0, 0, 0, 0.2);
    }

    .minibar .dropdown {
        width: 77px;
    }

    .minibar .dropdown + .dropdown {
        width: 68px;
    }

    .minibar .tool.drop {
        width: 33px;
    }

    .minibar .sizes {
        padding-left: 0;
    }

    .minibar > .bar {
        height: 46px;
        margin-top: 2px;
    }

    .minibar .drop.on .caret {
        box-sizing: content-box;
        padding: 9px 1px;
        background: #fff;
    }

    /* context menu */
    .context {
        position: absolute;
        left: 849px;
        top: 202px;
        box-sizing: border-box;
        width: 255px;
        border: 1px solid #cdd1dc;
        background: #fff;
        box-shadow: 1px 1px 2px rgba(60, 70, 110, 0.25);
    }

    .context hr {
        height: 1px;
        margin: 4px 0;
        border: 0;
        background: #e0e3e9;
    }

    .item {
        display: flex;
        align-items: center;
        height: 28px;
    }

    .item.short {
        height: 27px;
    }

    .item.hover {
        background: #e6eaef;
    }

    .item .bar {
        height: 16px;
    }

    .entry {
        display: flex;
        align-items: center;
        flex: 1;
        height: 100%;
        padding-left: 6px;
    }

    .slot {
        width: 27px;
    }

    kbd {
        margin-left: auto;
        padding-right: 17px;
        font-family: inherit;
        font-size: 13px;
        color: #85878c;
    }

    .more {
        margin: 0 8px 0 10px;
    }

    .coin {
        margin-left: 8px;
        fill: none;
        stroke: #f0b040;
    }

    .coin text {
        fill: #f0a020;
        stroke: none;
        font-weight: 700;
    }

    .extra {
        display: flex;
        align-items: center;
        gap: 7px;
        padding: 0 6px 0 8px;
    }

    .arrow {
        position: absolute;
        left: 807px;
        top: 194px;
        fill: none;
        filter: drop-shadow(3px 2px 2px rgba(0, 0, 0, 0.55));
        pointer-events: none;
    }

    .cursor {
        position: absolute;
        left: 998px;
        top: 499px;
        pointer-events: none;
    }

    .mark {
        position: absolute;
        right: 8px;
        bottom: 9px;
        display: flex;
        align-items: flex-start;
        opacity: 0.85;
        pointer-events: none;
    }

    .mark div {
        display: flex;
        flex-direction: column;
    }

    .mark b {
        font-size: 21px;
        line-height: 22px;
        color: #5594d0;
    }

    .mark span {
        font-family: "Liberation Sans", sans-serif;
        font-size: 17px;
        line-height: 18px;
        color: #45b86b;
        font-weight: 700;
    }
</style>
